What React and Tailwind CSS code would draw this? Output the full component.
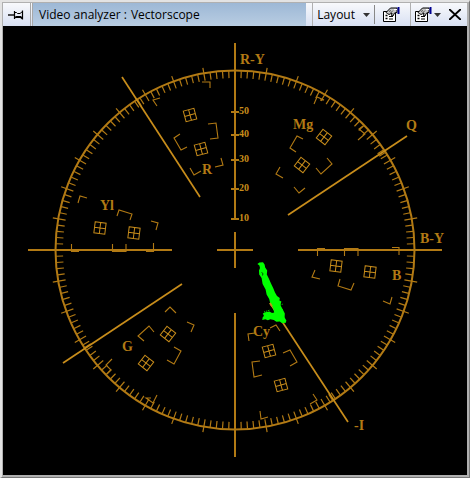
import React from 'react';

const CX = 235;
const CY = 250;

const polar = (deg, r) => {
  const a = (deg * Math.PI) / 180;
  return [CX + r * Math.sin(a), CY - r * Math.cos(a)];
};

const AXES = [
  [235, 43, 235, 219],
  [235, 232, 235, 268],
  [235, 313, 235, 457],
  [28, 250, 172, 250],
  [217, 250, 253, 250],
  [298, 250, 442, 250],
];

const IQ_LINES = [
  [122, 77, 200, 197],
  [407, 136, 288, 215],
  [63, 363, 182, 284],
  [270, 303, 348, 422],
];

const SCALE = [
  { value: 50, y: 112 },
  { value: 40, y: 135 },
  { value: 30, y: 160 },
  { value: 20, y: 189 },
  { value: 10, y: 219 },
];

// 75% and 100% targets: x, y, rotation
const TARGETS = [
  [201, 149, -15], [190, 115, -15],
  [302, 165, 38], [324, 137, 38],
  [100, 228, 7], [134, 233, 7],
  [336, 266, 7], [370, 272, 7],
  [168, 334, 38], [146, 363, 38],
  [269, 351, -15], [281, 385, -15],
];

const BRACKETS = [
  // R
  '202,82 210,82 210,88', '160,98 153,100 157,106',
  '208,124 216,123 218,138 210,139', '180,134 174,138 181,150 187,147',
  '190,168 194,175 201,171', '221,158 223,165 215,167',
  // Yl
  '78,203 80,196 87,198', '117,216 119,210 132,214 130,220',
  '151,221 158,223 156,230', '71.5,244 71.5,251.5 79,251.5',
  '112.5,244 112.5,251.5 126,251.5 126,244', '153.5,243 153.5,251.5 146,251.5',
  // G
  '165,312 170,307 176,313', '187,322 194,325 191,332',
  '154,332 149,326 138,336 144,341', '174,347 181,351 174,364 167,360',
  '112,359 106,365 111,370 107,374', '157,395 153,403 146,398 151,398',
  // Mg
  '314,104 317,97 324,100 320,100', '358,140 365,134 359,129 363,126',
  '303,139 297,136 290,148 296,152', '316,168 321,174 332,164 327,158',
  '280,167 276,174 283,178', '294,187 299,193 305,188',
  // B
  '317.5,256 317.5,248.5 325,248.5', '344.5,256 344.5,248.5 358,248.5 358,256',
  '392,247.5 399,247.5 399,255', '315,270 312,277 320,279',
  '340,279 338,286 351,290 354,283', '383,301 390,304 392,297',
  // Cy
  '249,341 248,334 255,333', '270,328 276,325 280,331',
  '260,361 252,362 254,377 262,375', '283,353 290,350 297,362 290,366',
  '260,411 261,419 268,417', '313,394 317,400 310,404',
];

const LABELS = [
  ['R-Y', 240, 64], ['B-Y', 420, 243], ['Q', 406, 130], ['-I', 354, 430],
  ['R', 202, 174], ['Mg', 293, 129], ['Yl', 100, 210],
  ['B', 392, 280], ['G', 122, 351], ['Cy', 253, 336],
];

const Graticule = () => {
  const ticks = [];
  for (let deg = 2; deg < 360; deg += 2) {
    if (deg % 90 === 0) continue;
    ticks.push([...polar(deg, 172), ...polar(deg, deg % 10 === 0 ? 185 : 179)]);
  }
  // extra marks where the I and Q axes cross the circle
  [57, 147, 237, 327].forEach((deg) => {
    ticks.push([...polar(deg, 172), ...polar(deg, 179)]);
  });

  return (
    <g fill="none" stroke="#b27a14">
      <circle cx={CX} cy={CY} r="179.5" strokeWidth="2" />
      {ticks.map(([x1, y1, x2, y2], i) => (
        <line key={i} x1={x1} y1={y1} x2={x2} y2={y2} strokeWidth="1.2" />
      ))}
      {AXES.map(([x1, y1, x2, y2], i) => (
        <line key={i} x1={x1} y1={y1} x2={x2} y2={y2} strokeWidth="2" />
      ))}
      {IQ_LINES.map(([x1, y1, x2, y2], i) => (
        <line key={i} x1={x1} y1={y1} x2={x2} y2={y2} stroke="#c88d1b" strokeWidth="1.7" />
      ))}
      {SCALE.map(({ value, y }) => (
        <line key={value} x1="231" y1={y} x2="239" y2={y} strokeWidth="2" />
      ))}
      {TARGETS.map(([x, y, rot], i) => (
        <path
          key={i}
          d="M-5.5-5.5h11v11h-11zM0-5.5v11M-5.5 0h11"
          transform={`translate(${x} ${y}) rotate(${rot})`}
          stroke="#c88d1b"
        />
      ))}
      {BRACKETS.map((points) => (
        <polyline key={points} points={points} strokeWidth="1.1" />
      ))}
    </g>
  );
};

const Trace = () => (
  <g fill="#00ff00">
    <path d="M257.4 264l2-1.6 3.6-.2 1.6 2.4.6 3 2 3-.4 4 2 4 2.2 5 2.4 5 1.6 4 2 3.4 2.8 2-.4 2.6 2 1-1 3.4 2.4 4.6 2 4-.2 4 1.8 3-.6 2.2-3.6.4-2.4-1.6-3.4.2-2.6-1.8-3.4-.8-2.6 1-2.4-1-3.2.8.6-3 1.2-1-1.2-2.4 2.6-1.4 4-.6 2.6 1.4 2.2-.6-1.2-5-2.6-3.4-1.2-5-2.6-4.4-1-5-3-5.6-1-6-2.4-3.6-.2-3.8 1-2.6-.6-2.4z" />
    <path
      d="M275 300l6 3M278 306l5-2M264 312l6-2M282 309l2 9"
      stroke="#00ff00"
      strokeWidth="1"
      strokeDasharray="1 1"
    />
    <path d="M261.5 272.5l1.5 1-.5 2" fill="none" stroke="#004800" />
    <path d="M270 303l2 3.4" fill="none" stroke="#c88d1b" strokeWidth="1.7" />
  </g>
);

const Vectorscope = () => (
  <svg
    viewBox="3 26 464 449"
    role="img"
    aria-label="Vectorscope"
    className="block h-auto w-full bg-black"
  >
    <Graticule />
    <Trace />
    <g fill="#b27a14" fontWeight="700" className="font-['Liberation_Serif',serif]">
      {LABELS.map(([text, x, y]) => (
        <text key={text} x={x} y={y} fontSize="14">{text}</text>
      ))}
      {SCALE.map(({ value, y }) => (
        <text key={value} x="239" y={y + 2} fontSize="10" fill="#c88d1b">{value}</text>
      ))}
    </g>
  </svg>
);

const PinIcon = () => (
  <svg viewBox="0 0 16 10" className="mr-px h-2.5 w-4" fill="none" stroke="#000">
    <path d="M0 5h6" strokeWidth="1.4" />
    <path d="M6.5 1v8M14.5 .5v9" strokeWidth="1.2" />
    <path d="M7 2.5h1.5l1 1h2.5l2.5-2" />
    <path d="M7 7.5l1.5-.5h4l2 1.5" strokeWidth="1.8" />
  </svg>
);

const PropertiesIcon = () => (
  <svg viewBox="0 0 17 15" className="h-[15px] w-[17px]" fill="none" stroke="#000">
    <path d="M.5 4.5h12v10H.5z" fill="#fff" />
    <path d="M2.5 8.5h2M2.5 11.5h2" strokeWidth="1.6" />
    <path d="M6 9.5h4M6 12h4" />
    <path d="M3 5.5L7.5 1H14v4.5l-2.5.5-1.5 3-1.5-.5.5-2.5-3 1.5-1.5-1z" fill="#c8c8c8" />
    <path d="M6 4.5l2-1M8 5.5l2-2M7 6.5l1.5-1" stroke="#555" />
    <path d="M11 2.5h3" stroke="#fff" />
    <path d="M15.5 0v7" stroke="#000090" strokeWidth="2" />
  </svg>
);

const Caret = () => (
  <svg viewBox="0 0 7 4" className="h-1 w-[7px]" fill="#333">
    <path d="M0 0h7L3.5 4z" />
  </svg>
);

const Toolbar = () => (
  <header className="flex h-[23px] items-stretch bg-gradient-to-b from-[#f8f9fc] to-[#d8e0f2] text-xs text-black">
    <button type="button" aria-label="Pin" className="flex w-7 items-center justify-center border-r border-[#a8a8a8]">
      <PinIcon />
    </button>
    <h1 className="ml-px flex grow items-center gap-1 whitespace-nowrap border-l border-[#a8a8a8] bg-gradient-to-b from-[#9db8d6] to-[#b9cde2] pt-px pl-1.5">
      <span>Video analyzer :</span>
      <span>Vectorscope</span>
    </h1>
    <div className="ml-1.5 flex items-stretch border-l border-[#b0b0b0]">
      <button type="button" className="flex items-center gap-2 px-1">
        Layout <Caret />
      </button>
      <button type="button" aria-label="Properties" className="my-0.5 flex w-9 items-center justify-center border-l border-[#888] pr-0.5">
        <PropertiesIcon />
      </button>
    </div>
    <div className="flex items-stretch border-l border-[#b0b0b0]">
      <button type="button" aria-label="Options" className="flex items-center gap-0.5 pr-0.5 pl-1">
        <PropertiesIcon /> <Caret />
      </button>
      <button type="button" aria-label="Close" className="flex w-6 items-center justify-center">
        <svg viewBox="0 0 12 11" className="h-[11px] w-3" stroke="#000" strokeWidth="2">
          <path d="M0 0l12 11M12 0L0 11" />
        </svg>
      </button>
    </div>
  </header>
);

const App = () => (
  <main className="min-h-screen border-t-2 border-r border-b border-l-2 border-[#e3e3e3] border-r-[#777] border-b-[#777] bg-[#b0b0b0] pt-px pr-0.5 pb-0.5 pl-px font-['Open_Sans',sans-serif]">
    <Toolbar />
    <Vectorscope />
  </main>
);

export default App;
